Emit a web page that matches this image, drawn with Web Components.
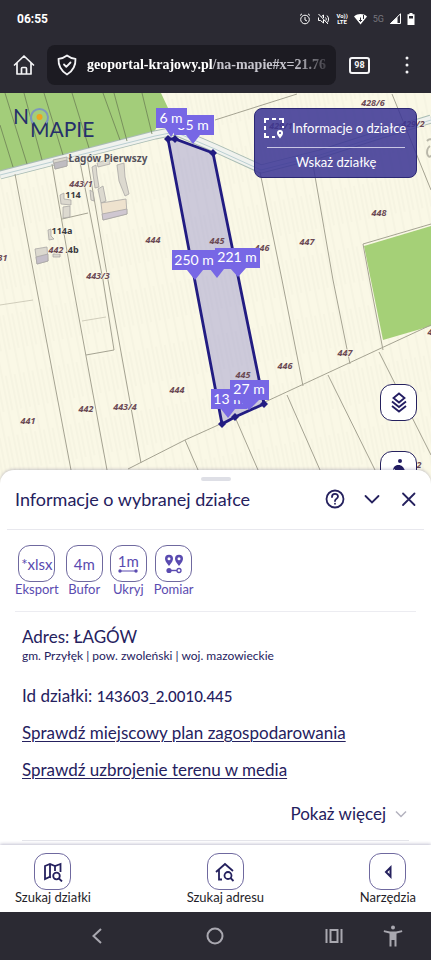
<!DOCTYPE html>
<html lang="pl">
<head>
<meta charset="utf-8">
<meta name="viewport" content="width=device-width, initial-scale=1">
<title>Na Mapie</title>
<style>
  body {
    margin: 0;
    background: #2b2a33;
    --navy: #25215e;
    --violet: #5a4bb0;
    --chrome: #2b2a33;
    font-family: Lato, "Noto Sans", sans-serif;
    color: var(--navy);
  }
</style>
</head>
<body>
<app-screen>
  <status-bar></status-bar>
  <browser-bar></browser-bar>
  <parcel-map></parcel-map>
  <parcel-sheet></parcel-sheet>
  <bottom-nav></bottom-nav>
  <system-nav></system-nav>
</app-screen>

<script>
function define(name, html) {
  customElements.define(name, class extends HTMLElement {
    constructor() {
      super();
      this.attachShadow({ mode: "open" });
      this.shadowRoot.innerHTML = html;
    }
  });
}

define("app-screen", `
  <style>
    :host {
      display: flex;
      flex-direction: column;
      min-height: 100vh;
    }
  </style>
  <slot></slot>
`);

define("status-bar", `
  <style>
    :host {
      display: flex;
      align-items: center;
      justify-content: space-between;
      height: 37px;
      padding: 0 16px 0 17px;
      background: var(--chrome);
      color: #fff;
      font-family: Roboto, sans-serif;
    }
    time { font-size: 12px; font-weight: 700; }
    .icons { display: flex; align-items: center; gap: 6px; }
    .lte { font-size: 6px; line-height: 6px; font-weight: 700; text-align: center; }
    .net { font-size: 9px; color: #77767d; }
    svg { display: block; }
  </style>
  <time>06:55</time>
  <div class="icons">
    <svg width="12" height="12" viewBox="0 0 12 12" fill="none" stroke="#fff">
      <circle cx="6" cy="6.5" r="4.3"/><path d="M6 4v3l2 1M1 2.5L3 .8M11 2.5L9 .8"/>
    </svg>
    <svg width="13" height="12" viewBox="0 0 13 12" fill="none" stroke="#fff">
      <path d="M1.5 4.5v3h2L6.500 10V7M4.500 3.500L6.500 2v3M1.500 1l9.500 10M8.500 4.500c1 1 1 2 .3 3M10 2.500c2 2 2 5 .4 7"/>
    </svg>
    <div class="lte">Vo))<br>LTE</div>
    <svg width="13" height="12" viewBox="0 0 13 12">
      <path d="M0 3.500C4 .3 9 .3 13 3.500L6.500 11.500Z" fill="#fff"/>
      <path d="M6.500 4.500v4M5 7l1.500 1.500L8 7M9.500 2v4" stroke="#2b2a33" fill="none"/>
    </svg>
    <span class="net">5G</span>
    <svg width="11" height="11" viewBox="0 0 11 11">
      <path d="M.5 10.500h10V.8Z" fill="none" stroke="#fff"/><path d="M0 11L7.500 4v7Z" fill="#fff"/>
    </svg>
    <svg width="8" height="12" viewBox="0 0 8 12">
      <path d="M2.500 0h3v1.200H7.500V12H.5V1.200h2Z" fill="#fff"/><path d="M2 3h4v2.500H2Z" fill="#2b2a33"/>
    </svg>
  </div>
`);

define("browser-bar", `
  <style>
    :host {
      display: flex;
      align-items: center;
      height: 56px;
      padding: 0 17px 0 13px;
      background: var(--chrome);
    }
    button {
      border: 0;
      padding: 0;
      background: none;
      color: #f4f4f6;
      font: inherit;
      cursor: pointer;
    }
    svg { display: block; flex: none; }
    .url {
      flex: 1;
      min-width: 0;
      display: flex;
      align-items: center;
      gap: 10px;
      height: 40px;
      margin: 0 13px 0 12px;
      padding: 0 2px 0 10px;
      border-radius: 8px;
      background: #1c1b22;
    }
    .address {
      flex: 1;
      min-width: 0;
      overflow: hidden;
      white-space: nowrap;
      text-align: left;
      font: 700 14px "Roboto Slab", "Liberation Serif", serif;
      color: #c6c5cd;
      -webkit-mask-image: linear-gradient(90deg, #000 84%, transparent);
      mask-image: linear-gradient(90deg, #000 84%, transparent);
    }
    .address b { color: #fff; }
    .tabs {
      width: 21px;
      height: 17px;
      border: 2px solid #f4f4f6;
      border-radius: 3px;
      box-sizing: border-box;
      font: 700 9px/13px Roboto, sans-serif;
      text-align: center;
    }
    .menu { margin-left: 30px; padding: 0 5px; }
  </style>
  <button aria-label="Strona główna">
    <svg width="22" height="22" viewBox="0 0 22 22" fill="none" stroke="#f4f4f6" stroke-width="1.700" stroke-linejoin="round" stroke-linecap="round">
      <path d="M1.500 11L11 2l9.500 9M4 9v11h14V9M8.500 20v-5.500a1 1 0 0 1 1-1h3a1 1 0 0 1 1 1V20"/>
    </svg>
  </button>
  <button class="url">
    <svg width="20" height="22" viewBox="0 0 20 22" fill="none" stroke="#f4f4f6" stroke-width="1.800" stroke-linejoin="round" stroke-linecap="round">
      <path d="M10 1.500c2.500 2 5 3 8.500 3.300C18.800 12 16 17 10 20.500 4 17 1.200 12 1.500 4.800 5 4.500 7.500 3.500 10 1.500Z"/>
      <path d="M7 10.500l2.300 2.300L13.500 8.500"/>
    </svg>
    <span class="address"><b>geoportal-krajowy.pl</b>/na-mapie#x=21.76</span>
  </button>
  <button class="tabs">98</button>
  <button class="menu" aria-label="Menu">
    <svg width="4" height="18" viewBox="0 0 4 18" fill="#f4f4f6">
      <circle cx="2" cy="2" r="1.500"/><circle cx="2" cy="9" r="1.500"/><circle cx="2" cy="16" r="1.500"/>
    </svg>
  </button>
`);

define("parcel-map", `
  <style>
    :host {
      display: block;
      position: relative;
      flex: 1;
      min-height: 300px;
      overflow: hidden;
      background: #faf8e6;
    }
    .canvas {
      position: absolute;
      width: 100%;
      height: 100%;
    }
    .plot { font: italic 700 9px "Noto Sans", sans-serif; fill: #6b4a55; text-anchor: middle; }
    .place { font: 700 10px "Noto Sans", sans-serif; fill: #55525c; text-anchor: middle; }
    .house { font: 700 9px "Noto Sans", sans-serif; fill: #3c3b3f; text-anchor: middle; }
    .plot, .place, .house { paint-order: stroke; stroke: #faf8e6; stroke-width: 1px; }
    .length { font: 14px Lato, sans-serif; fill: #fff; text-anchor: middle; }
    .logo { font: 21px Lato, sans-serif; fill: #26306b; }
    map-hint { position: absolute; top: 15px; right: 14px; }
    .controls {
      position: absolute;
      top: 291px;
      right: 14px;
      display: flex;
      flex-direction: column;
      gap: 30px;
    }
    .controls button {
      width: 37px;
      height: 37px;
      padding: 0;
      display: grid;
      place-items: center;
      border: 1px solid var(--navy);
      border-radius: 12px;
      background: #fff;
    }
  </style>
  <svg class="canvas" viewBox="0 93 431 391" preserveAspectRatio="xMidYMin slice">
    <!-- land -->
    <defs>
      <pattern id="furrows" width="9" height="60" patternUnits="userSpaceOnUse" patternTransform="rotate(-11)">
        <path d="M2 0v60M6 10v35" stroke="#e9e6d3" stroke-width=".8" opacity=".6"/>
      </pattern>
    </defs>
    <path d="M0 93H431V484H0Z" fill="#faf8e6"/>
    <path d="M0 93H431V484H0Z" fill="url(#furrows)"/>
    <path d="M0 93H161L168 108 154 132 0 171Z" fill="#a3cd7a"/>
    <path d="M364 246L431 226V326L383 340Z" fill="#a5d077"/>
    <!-- road -->
    <path d="M0 175L155 135 175 131 215 148 261 169 320 154 382 134 431 119" fill="none" stroke="#a9bcb4" stroke-width="9"/>
    <path d="M0 175L155 135 175 131 215 148 261 169 320 154 382 134 431 119" fill="none" stroke="#f0f2ee" stroke-width="7"/>
    <path d="M0 175L155 136 175 132 215 149 261 170 320 155 382 135 431 120" fill="none" stroke="#b9cfd2" stroke-width="1"/>
    <!-- plot borders -->
    <g fill="none" stroke="#6d8055" stroke-width=".8">
      <path d="M0 125L13 167M5 93L27 164M24 93L42 160M44 93L63 155M72 93L89 148M103 93L120 140M114 93L127 141M142 93L152 134"/>
    </g>
    <g fill="none" stroke="#a5a392" stroke-width="1">
      <path d="M15 174L35 280 71 470M52 164L72 280 107 470M80 162L103 280 114 350 86 355M87 157L108 280 141 463M62 219L88 213"/>
      <path d="M128 469L185 440 216 426 265 402 431 325M185 440L198 470M235 417L258 470M287 395L320 470M328 375L375 470M379 352L431 455"/>
      <path d="M260 172L282 280 303 386M312 159L333 280 350 364M431 224L363 244 370 282 383 350M215 120L297 94M392 94L431 190"/>
    </g>
    <path d="M0 305L33 300M82 321L106 317" fill="none" stroke="#d0cdbb"/>
    <path d="M427 141c6-7 10 8 5 14s-7-6-2-9" fill="none" stroke="#b9b7a9" stroke-width="2"/>
    <!-- buildings -->
    <g fill="#dcd9cf" stroke="#aaa7a5" stroke-width=".8">
      <path d="M53 160L67 157V166L55 169Z"/><path d="M54 163L67 160V166L55 169Z" fill="#bfbcc1"/>
      <path d="M92 167L96 165 97 175 99 187 95 188Z"/><path d="M98 189L103 186 106 201 101 203Z"/><path d="M90 190L93 192 94 201 91 200Z"/>
      <path d="M97 163L109 159 110 164 98 167Z"/>
      <path d="M117 165L124 163 125 177 129 194 125 196 119 181Z"/>
      <path d="M101 203L126 199 127 214 103 220Z" fill="#eee2ce"/><path d="M102 214L127 209V214L103 220Z" fill="#cfc7d1"/>
      <path d="M60 195L64 193V199L71 200V205L61 204Z"/><path d="M63 207L70 206V217L63 218Z"/>
      <path d="M48 230L51 229V236L54 239 49 240Z"/>
      <path d="M35 249L47 247 48 261 37 264Z"/><path d="M36 257L48 254V261L37 264Z" fill="#c5bfc9"/><path d="M53 254h7v3h-7Z"/>
    </g>
    <g class="place"><text x="108" y="162">Łagów Pierwszy</text></g>
    <g class="house">
      <text x="73" y="198">114</text>
      <text x="62" y="234">114a</text>
      <text x="72" y="253">.4b</text>
    </g>
    <g class="plot">
      <text x="81" y="187">443/1</text>
      <text x="56" y="253">442</text>
      <text x="0" y="261">431</text>
      <text x="153" y="243">444</text>
      <text x="98" y="279">443/3</text>
      <text x="373" y="106">428/6</text>
      <text x="281" y="129">429/1</text>
      <text x="413" y="127">429/2</text>
      <text x="379" y="216">448</text>
      <text x="307" y="245">447</text>
      <text x="262" y="251">446</text>
      <text x="345" y="356">447</text>
      <text x="285" y="369">446</text>
      <text x="177" y="393">444</text>
      <text x="86" y="412">442</text>
      <text x="125" y="410">443/4</text>
      <text x="28" y="424">441</text>
      <text x="435" y="335">449</text>
      <text x="414" y="468">452</text>
    </g>

    <!-- selected plot -->
    <path d="M168 139L175 139 213 153 264 404 235 417 222 424Z" fill="#8f8bcb" fill-opacity=".42" stroke="#221c82" stroke-width="2.800"/>
    <g class="plot"><text x="217" y="244" stroke="none">445</text><text x="243" y="378" stroke="none">445</text></g>
    <g fill="#221c82">
      <path id="node" d="M168 135L172 139 168 143 164 139Z"/>
      <use href="#node" x="7"/><use href="#node" x="45" y="14"/>
      <use href="#node" x="96" y="265"/><use href="#node" x="67" y="278"/><use href="#node" x="54" y="285"/>
    </g>
    <!-- side lengths -->
    <g fill="#7767e5">
      <path d="M174 115h40v20h-14l-7 9-7-9h-12Z"/>
      <text class="length" x="193" y="130">35 m</text>
      <path d="M156 108h31v20h-10l-6 9-6-9h-9Z"/>
      <text class="length" x="171" y="123">6 m</text>
      <path d="M200 251h32v18h-8l-7 9-7-9h-10Z"/>
      <path d="M172 250h45v20h-14l-8 10-8-10h-15Z"/>
      <text class="length" x="194" y="265">250 m</text>
      <path d="M215 248h45v20h-14l-8 9-8-9h-15Z"/>
      <text class="length" x="237" y="262">221 m</text>
      <path d="M211 389h36v20h-12l-7 9-7-9h-10Z"/>
      <text class="length" x="229" y="404">13 m</text>
      <path d="M230 380h39v20h-10l-10 10-10-10h-9Z"/>
      <text class="length" x="249" y="394">27 m</text>
    </g>

    <!-- logo -->
    <g class="logo">
      <text x="13" y="124">N</text>
      <text x="30" y="137">MAPIE</text>
      <path d="M33 123a8.500 8.500 0 1 1 13 0" fill="none" stroke="#7e97bd" stroke-width="2"/>
      <circle cx="39.500" cy="117" r="3" fill="#eda51f"/>
    </g>
  </svg>
  <map-hint></map-hint>
  <div class="controls">
    <button aria-label="Warstwy">
      <svg width="20" height="24" viewBox="0 0 20 24" fill="none" stroke="#221c62" stroke-width="1.800">
        <path d="M10 2.500L15.500 7 10 11.500 4.500 7ZM3 10.500L10 16l7-5.500M3 15L10 20.500 17 15"/>
      </svg>
    </button>
    <button aria-label="Widok ulicy">
      <svg width="22" height="24" viewBox="0 0 22 24" fill="#221c62">
        <circle cx="12" cy="3" r="2"/><path d="M5 12c1-5 4-5 6-5s5 2 6 6l-5-1v11H7V11Z"/>
      </svg>
    </button>
  </div>
`);

define("map-hint", `
  <style>
    :host {
      display: block;
      box-sizing: border-box;
      width: 163px;
      height: 70px;
      padding: 5px 8px 0 9px;
      border: 1px solid #2c2874;
      border-radius: 8px;
      background: rgba(58, 52, 148, .86);
      color: #fff;
      font-size: 13px;
    }
    .title {
      display: flex;
      align-items: center;
      gap: 8px;
      height: 28px;
      white-space: nowrap;
    }
    hr { margin: 5px 3px 0; border: 0; border-top: 1px solid #c9c6e4; }
    button {
      display: block;
      width: 100%;
      height: 28px;
      padding: 0;
      border: 0;
      background: none;
      color: inherit;
      font: inherit;
    }
  </style>
  <div class="title">
    <svg width="20" height="22" viewBox="0 0 20 22" fill="none" stroke="#fff" stroke-width="2">
      <path d="M1 6V2h4M8 2h4M15 2h4v4M1 9v4M1 16v4h4M8 20h3M19 9v2"/>
      <path d="M16 21.500c-2-2.500-3-4-3-5.500a3 3 0 0 1 6 0c0 1.500-1 3-3 5.500Z" fill="#fff" stroke="none"/>
      <circle cx="16" cy="16" r="1" fill="#413896" stroke="none"/>
    </svg>
    <span>Informacje o działce</span>
  </div>
  <hr>
  <button>Wskaż działkę</button>
`);

// Rounded square with a caption under it, the icon comes in through the slot
define("tool-button", `
  <style>
    :host { display: block; color: var(--violet); }
    button {
      display: flex;
      flex-direction: column;
      align-items: center;
      padding: 0;
      border: 0;
      background: none;
      color: inherit;
      font: inherit;
      cursor: pointer;
    }
    .box {
      display: grid;
      place-items: center;
      box-sizing: border-box;
      width: 37px;
      height: 37px;
      border: 1px solid #6f699f;
      border-radius: 12px;
      font-size: 15px;
    }
    .caption { font-size: 13px; line-height: 14px; }
  </style>
  <button>
    <span class="box"><slot name="icon"></slot></span>
    <span class="caption"><slot></slot></span>
  </button>
`);

define("parcel-sheet", `
  <style>
    :host {
      display: block;
      position: relative;
      margin-top: -14px;
      padding: 0 7px 4px;
      border-radius: 14px 14px 0 0;
      background: #fff;
      box-shadow: 0 -1px 3px rgba(60, 55, 110, .25);
    }
    .handle {
      width: 30px;
      height: 4px;
      margin: 0 auto;
      border-radius: 2px;
      background: #dedfe6;
    }
    .grip { padding-top: 7px; }
    header {
      display: flex;
      align-items: center;
      height: 36px;
      padding: 0 3px 12px 8px;
      border-bottom: 1px solid #e8e8ee;
    }
    h1 { flex: 1; margin: 0; font-size: 18px; font-weight: 400; }
    .actions { display: flex; gap: 13px; }
    .actions button {
      width: 24px;
      height: 24px;
      padding: 0;
      border: 0;
      background: none;
    }
    .actions svg { display: block; }
    .tools {
      display: flex;
      gap: 7px;
      margin: 0 8px;
      padding: 15px 0 15px;
      border-bottom: 1px solid #ececf1;
    }
    .tools svg { display: block; }
    .ruler { display: grid; justify-items: center; line-height: 15px; }
    .details {
      margin: 0 15px;
      border-bottom: 1px solid #e4e4ea;
    }
    p, h2 { margin: 0; }
    h2 { padding-top: 14px; font-size: 17px; line-height: 22px; font-weight: 400; }
    .area { font-size: 12px; line-height: 16px; }
    .row { padding-top: 13px; font-size: 17px; line-height: 24px; }
    .id { padding-top: 20px; }
    .id span { font-size: 15px; font-weight: 500; }
    a { color: inherit; text-underline-offset: 2px; text-decoration-thickness: 1px; }
    .more {
      display: flex;
      align-items: center;
      gap: 9px;
      margin: 22px 0 0 auto;
      padding: 0 2px 16px 0;
      border: 0;
      background: none;
      color: inherit;
      font: inherit;
      font-size: 17px;
      line-height: 20px;
    }
  </style>
  <div class="grip"><div class="handle"></div></div>
  <header>
    <h1>Informacje o wybranej działce</h1>
    <div class="actions">
      <button aria-label="Pomoc">
        <svg width="24" height="24" viewBox="0 0 24 24" fill="none" stroke="#25215e" stroke-width="1.800" stroke-linecap="round">
          <circle cx="12" cy="12" r="8.500"/><path d="M9 10c0-4 6-4 6-.5 0 2.500-3 2-3 4.500"/><path d="M12 16.700v.1"/>
        </svg>
      </button>
      <button aria-label="Zwiń">
        <svg width="24" height="24" viewBox="0 0 24 24" fill="none" stroke="#25215e" stroke-width="1.800" stroke-linecap="round"><path d="M5.500 9L12 15.500 18.500 9"/></svg>
      </button>
      <button aria-label="Zamknij">
        <svg width="24" height="24" viewBox="0 0 24 24" fill="none" stroke="#25215e" stroke-width="1.800" stroke-linecap="round"><path d="M6 6.500L17.500 18M17.500 6.500L6 18"/></svg>
      </button>
    </div>
  </header>
  <div class="tools">
    <tool-button><span slot="icon">*xlsx</span>Eksport</tool-button>
    <tool-button><span slot="icon">4m</span>Bufor</tool-button>
    <tool-button>
      <span slot="icon" class="ruler">1m
        <svg width="20" height="4" viewBox="0 0 20 4" fill="#5a4bb0"><path d="M2 1.500h16v1H2Z"/><circle cx="2" cy="2" r="1.700"/><circle cx="18" cy="2" r="1.700"/></svg>
      </span>Ukryj
    </tool-button>
    <tool-button>
      <svg slot="icon" width="20" height="20" viewBox="0 0 20 20" fill="#5a4bb0">
        <path fill-rule="evenodd" d="M5 12C2 8.500 1 6.500 1 4.800a4 4 0 0 1 8 0C9 6.500 8 8.500 5 12ZM5 6.200a1.500 1.500 0 1 0 0-3 1.500 1.500 0 0 0 0 3ZM15 12c-3-3.500-4-5.500-4-7.200a4 4 0 0 1 8 0c0 1.700-1 3.700-4 7.200ZM15 6.200a1.500 1.500 0 1 0 0-3 1.500 1.500 0 0 0 0 3Z"/>
        <circle cx="5" cy="16.500" r="2.600"/><path d="M5 15.800h8v1.400H5Z"/>
        <circle cx="15" cy="16.500" r="2" fill="#fff" stroke="#5a4bb0" stroke-width="1.300"/>
      </svg>Pomiar
    </tool-button>
  </div>
  <div class="details">
    <h2>Adres: ŁAGÓW</h2>
    <p class="area">gm. Przyłęk | pow. zwoleński | woj. mazowieckie</p>
    <p class="row id">Id działki: <span>143603_2.0010.445</span></p>
    <p class="row"><a href="#plan">Sprawdź miejscowy plan zagospodarowania</a></p>
    <p class="row"><a href="#media">Sprawdź uzbrojenie terenu w media</a></p>
    <button class="more">Pokaż więcej
      <svg width="12" height="8" viewBox="0 0 12 8" fill="none" stroke="#b3b2bf" stroke-width="1.500"><path d="M1 1.500L6 6.500 11 1.500"/></svg>
    </button>
  </div>
`);

define("bottom-nav", `
  <style>
    :host {
      display: flex;
      position: relative;
      justify-content: space-between;
      padding: 8px 15px 8px;
      background: #fff;
      box-shadow: 0 -1px 3px rgba(60, 55, 110, .3);
    }
    tool-button { color: #1f1e29; }
    svg { display: block; }
  </style>
  <tool-button>
    <svg slot="icon" width="20" height="20" viewBox="0 0 20 20" fill="none" stroke="#25215e" stroke-width="1.800">
      <path d="M8 15.500L6.500 15 2 17V4L7 2l5 2 5.500-2v8M7 2v13M12 4v5"/><circle cx="13.500" cy="14" r="3.300"/><path d="M16 16.500l3 3"/>
    </svg>Szukaj działki
  </tool-button>
  <tool-button>
    <svg slot="icon" width="20" height="20" viewBox="0 0 20 20" fill="none" stroke="#25215e" stroke-width="1.800">
      <path d="M7 17.500H4V8M1 10L10 2l8 7"/><circle cx="13" cy="13.500" r="3.500"/><path d="M15.500 16l3 3"/>
    </svg>Szukaj adresu
  </tool-button>
  <tool-button>
    <svg slot="icon" width="20" height="20" viewBox="0 0 20 20" fill="none" stroke="#25215e" stroke-width="2"><path d="M12.500 5.500v9L8 10Z"/></svg>Narzędzia
  </tool-button>
`);

define("system-nav", `
  <style>
    :host {
      display: grid;
      grid-template-columns: 45% 10% 44% 1%;
      align-items: center;
      height: 48px;
      position: relative;
      background: var(--chrome);
    }
    div { display: flex; justify-content: center; }
    .end { justify-content: flex-end; gap: 35px; padding-right: 22px; }
    button { padding: 0; border: 0; background: none; }
    svg { display: block; }
  </style>
  <div>
    <button aria-label="Wstecz"><svg width="24" height="24" viewBox="0 0 24 24" fill="none" stroke="#a9a8b0" stroke-width="2"><path d="M16 5L8.500 12 16 19"/></svg></button>
  </div>
  <div>
    <button aria-label="Ekran główny"><svg width="24" height="24" viewBox="0 0 24 24" fill="none" stroke="#a9a8b0" stroke-width="2"><circle cx="12" cy="12" r="7.500"/></svg></button>
  </div>
  <div class="end">
    <button aria-label="Ostatnie"><svg width="24" height="24" viewBox="0 0 24 24" fill="none" stroke="#a9a8b0" stroke-width="2"><path d="M4.500 5v14M19.500 5v14M8.500 6h7v12h-7Z"/></svg></button>
    <button aria-label="Ułatwienia dostępu"><svg width="24" height="24" viewBox="0 0 24 24" fill="#a9a8b0"><circle cx="12" cy="3.500" r="2"/><path d="M3 6.200L9 7.500h6l6-1.300.3 1.800L15.500 9.500V22.500h-2V16h-3v6.500h-2V9.500L2.700 8Z"/></svg></button>
  </div>
`);
</script>
</body>
</html>
